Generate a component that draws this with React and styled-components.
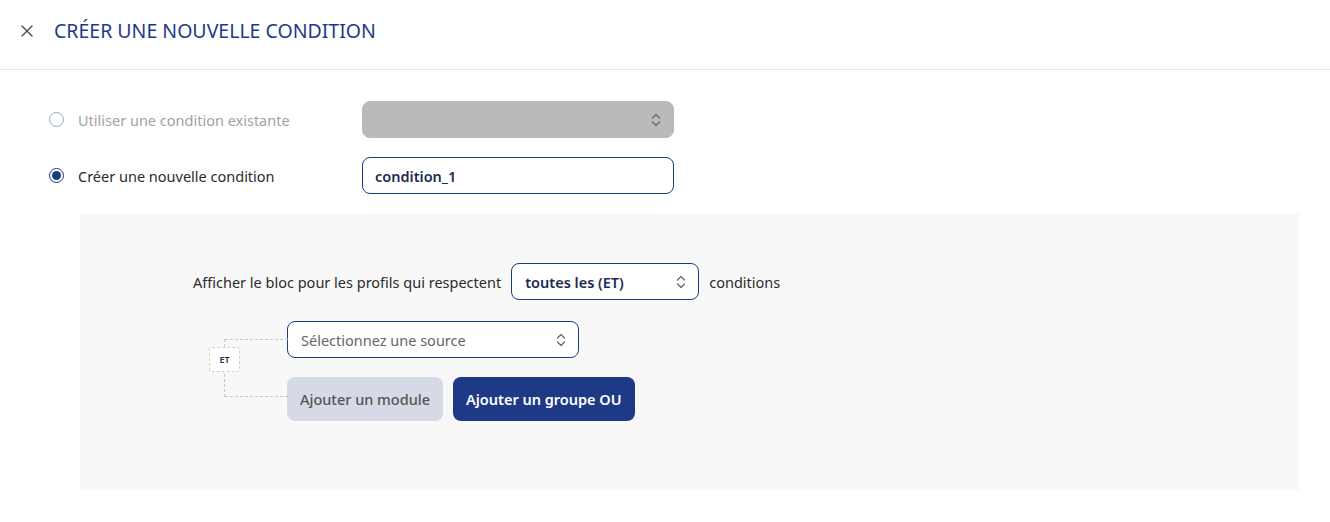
import React, { useState } from 'react'
import styled, { createGlobalStyle } from 'styled-components'

const GlobalStyle = createGlobalStyle`
  body {
    margin: 0;
    background: #fff;
    font-family: "Noto Sans", "Open Sans", sans-serif;
    color: #2b2b2b;
  }
`

const NAVY = '#1e3a87'

function Chevrons() {
  return (
    <svg width="10" height="16" viewBox="0 0 10 16" fill="none" stroke="#666" strokeWidth="1.2" strokeLinecap="round" strokeLinejoin="round">
      <path d="M1.5 6 L5 2.5 L8.5 6" />
      <path d="M1.5 10 L5 13.5 L8.5 10" />
    </svg>
  )
}

function Close() {
  return (
    <svg width="12" height="12" viewBox="0 0 12 12" stroke="#555" strokeWidth="1.5" strokeLinecap="round">
      <path d="M1 1 L11 11" />
      <path d="M11 1 L1 11" />
    </svg>
  )
}

function App() {
  const [mode, setMode] = useState('new')
  const [name, setName] = useState('condition_1')

  return (
    <Page>
      <GlobalStyle />
      <Header>
        <CloseButton><Close /></CloseButton>
        <Title>CRÉER UNE NOUVELLE CONDITION</Title>
      </Header>

      <Body>
        <OptionRow>
          <RadioLabel disabled onClick={() => setMode('existing')}>
            <Radio checked={mode === 'existing'} disabled />
            Utiliser une condition existante
          </RadioLabel>
          <Select disabled width={312}>
            <span />
            <Chevrons />
          </Select>
        </OptionRow>

        <OptionRow>
          <RadioLabel onClick={() => setMode('new')}>
            <Radio checked={mode === 'new'} />
            Créer une nouvelle condition
          </RadioLabel>
          <TextInput value={name} onChange={(e) => setName(e.target.value)} />
        </OptionRow>

        <Panel>
          <RuleLine>
            <span>Afficher le bloc pour les profils qui respectent</span>
            <Select width={188} bold>
              <span>toutes les (ET)</span>
              <Chevrons />
            </Select>
            <span>conditions</span>
          </RuleLine>

          <Tree>
            <Connector>
              <Badge>ET</Badge>
            </Connector>
            <Branches>
              <Select width={292} placeholder>
                <span>Sélectionnez une source</span>
                <Chevrons />
              </Select>
              <Buttons>
                <Button variant="light">Ajouter un module</Button>
                <Button variant="dark">Ajouter un groupe OU</Button>
              </Buttons>
            </Branches>
          </Tree>
        </Panel>
      </Body>
    </Page>
  )
}

export default App

const Page = styled.div`
  width: 1330px;
  min-height: 522px;
`

const Header = styled.header`
  height: 49px;
  display: flex;
  align-items: flex-start;
  padding: 20px 0 0 20px;
  border-bottom: 1px solid #e6e6e6;
`

const CloseButton = styled.button`
  border: none;
  background: none;
  padding: 0;
  width: 14px;
  height: 22px;
  display: flex;
  align-items: center;
  justify-content: center;
  margin-right: 20px;
`

const Title = styled.h1`
  margin: 0;
  font-size: 19.5px;
  line-height: 22px;
  font-weight: 400;
  color: ${NAVY};
`

const Body = styled.div`
  padding: 31px 31px 0 49px;
`

const OptionRow = styled.div`
  display: flex;
  align-items: center;
  height: 37px;
  margin-bottom: 19px;
`

const RadioLabel = styled.label`
  width: 313px;
  display: flex;
  align-items: center;
  gap: 14px;
  font-size: 14.5px;
  color: ${(p) => (p.disabled ? '#a3a3a3' : '#2b2b2b')};
  cursor: pointer;
`

const Radio = styled.span`
  width: 15px;
  height: 15px;
  box-sizing: border-box;
  border-radius: 50%;
  border: 1px solid ${(p) => (p.disabled ? '#9aa6cc' : NAVY)};
  display: flex;
  align-items: center;
  justify-content: center;
  &::after {
    content: '';
    width: 9px;
    height: 9px;
    border-radius: 50%;
    background: ${NAVY};
    display: ${(p) => (p.checked ? 'block' : 'none')};
  }
`

const Select = styled.div`
  width: ${(p) => p.width}px;
  height: 37px;
  box-sizing: border-box;
  border-radius: 8px;
  display: flex;
  align-items: center;
  justify-content: space-between;
  padding: 0 12px 0 13px;
  font-size: 14.5px;
  background: ${(p) => (p.disabled ? '#bababa' : '#fff')};
  border: 1px solid ${(p) => (p.disabled ? '#bababa' : NAVY)};
  color: ${(p) => (p.placeholder ? '#666' : '#1c2a55')};
  font-weight: ${(p) => (p.bold ? 600 : 400)};
  flex-shrink: 0;
`

const TextInput = styled.input`
  width: 312px;
  height: 37px;
  box-sizing: border-box;
  border: 1px solid ${NAVY};
  border-radius: 8px;
  padding: 0 12px;
  font-family: inherit;
  font-size: 14.5px;
  font-weight: 600;
  color: #1c2a55;
  outline: none;
`

const Panel = styled.section`
  margin: 0 0 0 31px;
  width: 1219px;
  height: 277px;
  box-sizing: border-box;
  background: #f8f8f8;
  padding: 50px 0 0 113px;
`

const RuleLine = styled.div`
  display: flex;
  align-items: center;
  gap: 10px;
  font-size: 14.5px;
  color: #2b2b2b;
`

const Tree = styled.div`
  display: flex;
  margin-top: 21px;
  margin-left: 15px;
`

const Connector = styled.div`
  position: relative;
  width: 79px;
  margin-top: 18px;
  height: 58px;
  box-sizing: border-box;
  border-left: 1px dashed #c8c8c8;
  margin-left: 16px;
  &::before,
  &::after {
    content: '';
    position: absolute;
    left: 0;
    width: 63px;
    border-top: 1px dashed #c8c8c8;
  }
  &::before { top: 0; }
  &::after { bottom: 0; }
`

const Badge = styled.span`
  position: absolute;
  left: -16px;
  top: 8px;
  width: 31px;
  height: 25px;
  box-sizing: border-box;
  border: 1px dashed #d0d0d0;
  border-radius: 3px;
  background: #fff;
  font-size: 9px;
  font-weight: 600;
  color: #1c2a55;
  display: flex;
  align-items: center;
  justify-content: center;
`

const Branches = styled.div`
  display: flex;
  flex-direction: column;
  gap: 19px;
  margin-left: -16px;
`

const Buttons = styled.div`
  display: flex;
  gap: 10px;
`

const Button = styled.button`
  height: 44px;
  border: none;
  border-radius: 8px;
  padding: 0 13px;
  font-family: inherit;
  font-size: 14.5px;
  font-weight: ${(p) => (p.variant === 'dark' ? 600 : 500)};
  background: ${(p) => (p.variant === 'dark' ? NAVY : '#d6d9e6')};
  color: ${(p) => (p.variant === 'dark' ? '#fff' : '#555')};
  cursor: pointer;
`
